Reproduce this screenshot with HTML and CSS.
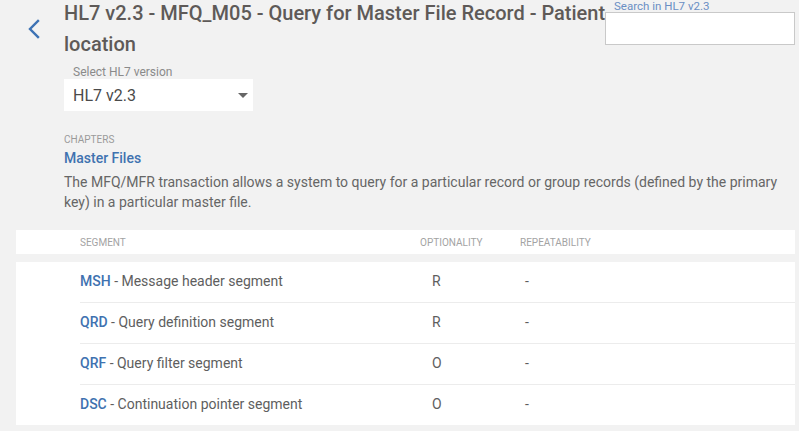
FILE: index.html
```html
<!DOCTYPE html>
<html>
<head>
<meta charset="utf-8">
<link rel="stylesheet" href="styles.css">
</head>
<body>
<div class="page">
  <header class="top">
    <a class="back" href="#"><svg width="14" height="20" viewBox="0 0 14 20"><path d="M11 2 L3 10 L11 18" fill="none" stroke="#3d72b4" stroke-width="2.4" stroke-linecap="square"/></svg></a>
    <div class="head-main">
      <h1 class="title">HL7 v2.3 - MFQ_M05 - Query for Master File Record - Patient location</h1>
      <div class="version">
        <div class="version-label">Select HL7 version</div>
        <div class="select"><span>HL7 v2.3</span><span class="caret"></span></div>
      </div>
    </div>
    <div class="search">
      <div class="search-label">Search in HL7 v2.3</div>
      <div class="search-box"></div>
    </div>
  </header>

  <section class="chapter">
    <div class="chapter-label">CHAPTERS</div>
    <div class="chapter-name">Master Files</div>
    <p class="desc">The MFQ/MFR transaction allows a system to query for a particular record or group records (defined by the primary key) in a particular master file.</p>
  </section>

  <div class="thead">
    <div class="c-seg">SEGMENT</div>
    <div class="c-opt">OPTIONALITY</div>
    <div class="c-rep">REPEATABILITY</div>
  </div>
  <div class="tbody">
    <div class="row"><div class="c-seg"><b>MSH</b> - Message header segment</div><div class="c-opt v">R</div><div class="c-rep v">-</div></div>
    <div class="row"><div class="c-seg"><b>QRD</b> - Query definition segment</div><div class="c-opt v">R</div><div class="c-rep v">-</div></div>
    <div class="row"><div class="c-seg"><b>QRF</b> - Query filter segment</div><div class="c-opt v">O</div><div class="c-rep v">-</div></div>
    <div class="row"><div class="c-seg"><b>DSC</b> - Continuation pointer segment</div><div class="c-opt v">O</div><div class="c-rep v">-</div></div>
  </div>
</div>
</body>
</html>
```

FILE: styles.css
```css
html, body { margin: 0; padding: 0; }
body {
  background: #f2f2f2;
  font-family: Roboto, "Liberation Sans", sans-serif;
  color: #5e5e5e;
  width: 799px;
  height: 431px;
  overflow: hidden;
}
.page { padding: 0 4px 0 16px; }
.top {
  display: flex;
  align-items: flex-start;
  height: 116px;
}
.back {
  display: block;
  margin: 19px 0 0 11px;
  width: 14px;
  height: 20px;
}
.head-main {
  width: 541px;
  margin-left: 23px;
}
.title {
  margin: 0;
  font-size: 20px;
  font-weight: 500;
  line-height: 31px;
  color: #5e5a58;
  margin-top: -2px;
  width: 560px;
}
.version { margin-top: 6px; }
.version-label {
  font-size: 12px;
  color: #8a8a8a;
  padding-left: 9px;
  line-height: 13px;
}
.select {
  box-sizing: border-box;
  width: 189px;
  height: 32px;
  background: #fff;
  padding: 0 5px 0 9px;
  display: flex;
  align-items: center;
  justify-content: space-between;
  font-size: 16px;
  color: #4a4a4a;
}
.caret {
  width: 0; height: 0;
  border-left: 5px solid transparent;
  border-right: 5px solid transparent;
  border-top: 5px solid #666;
}
.search { width: 190px; }
.search-label {
  font-size: 11.5px;
  color: #6a8fc4;
  line-height: 12px;
  padding-left: 9px;
}
.search-box {
  height: 31px;
  background: #fff;
  border: 1px solid #c9c9c9;
}
.chapter { padding-left: 48px; padding-right: 0; }
.chapter-label {
  font-size: 10px;
  color: #9a9a9a;
  line-height: 12px;
  margin-top: 18px;
}
.chapter-name {
  font-size: 14px;
  font-weight: 500;
  color: #3f72b0;
  line-height: 20px;
  margin-top: 2px;
}
.desc {
  margin: 4px 0 0 0;
  font-size: 14px;
  line-height: 20px;
  color: #666;
}
.thead {
  margin-top: 18px;
  background: #fff;
  height: 24px;
  display: flex;
  align-items: center;
  font-size: 10px;
  color: #a3a3a3;
}
.c-seg { width: 340px; padding-left: 64px; }
.c-opt { width: 100px; }
.c-rep { flex: 1; }
.tbody {
  margin-top: 8px;
  background: #fff;
  padding-left: 64px;
}
.row {
  height: 41px;
  padding-bottom: 2px;
  display: flex;
  align-items: center;
  border-bottom: 1px solid #ececec;
  font-size: 14px;
  color: #5e5e5e;
  box-sizing: border-box;
}
.row:last-child { border-bottom: none; height: 40px; }
.row .c-seg { padding-left: 0; width: 340px; }
.row b { color: #3f72b0; font-weight: 500; }
.row .c-opt { padding-left: 12px; width: 93px; }
```
